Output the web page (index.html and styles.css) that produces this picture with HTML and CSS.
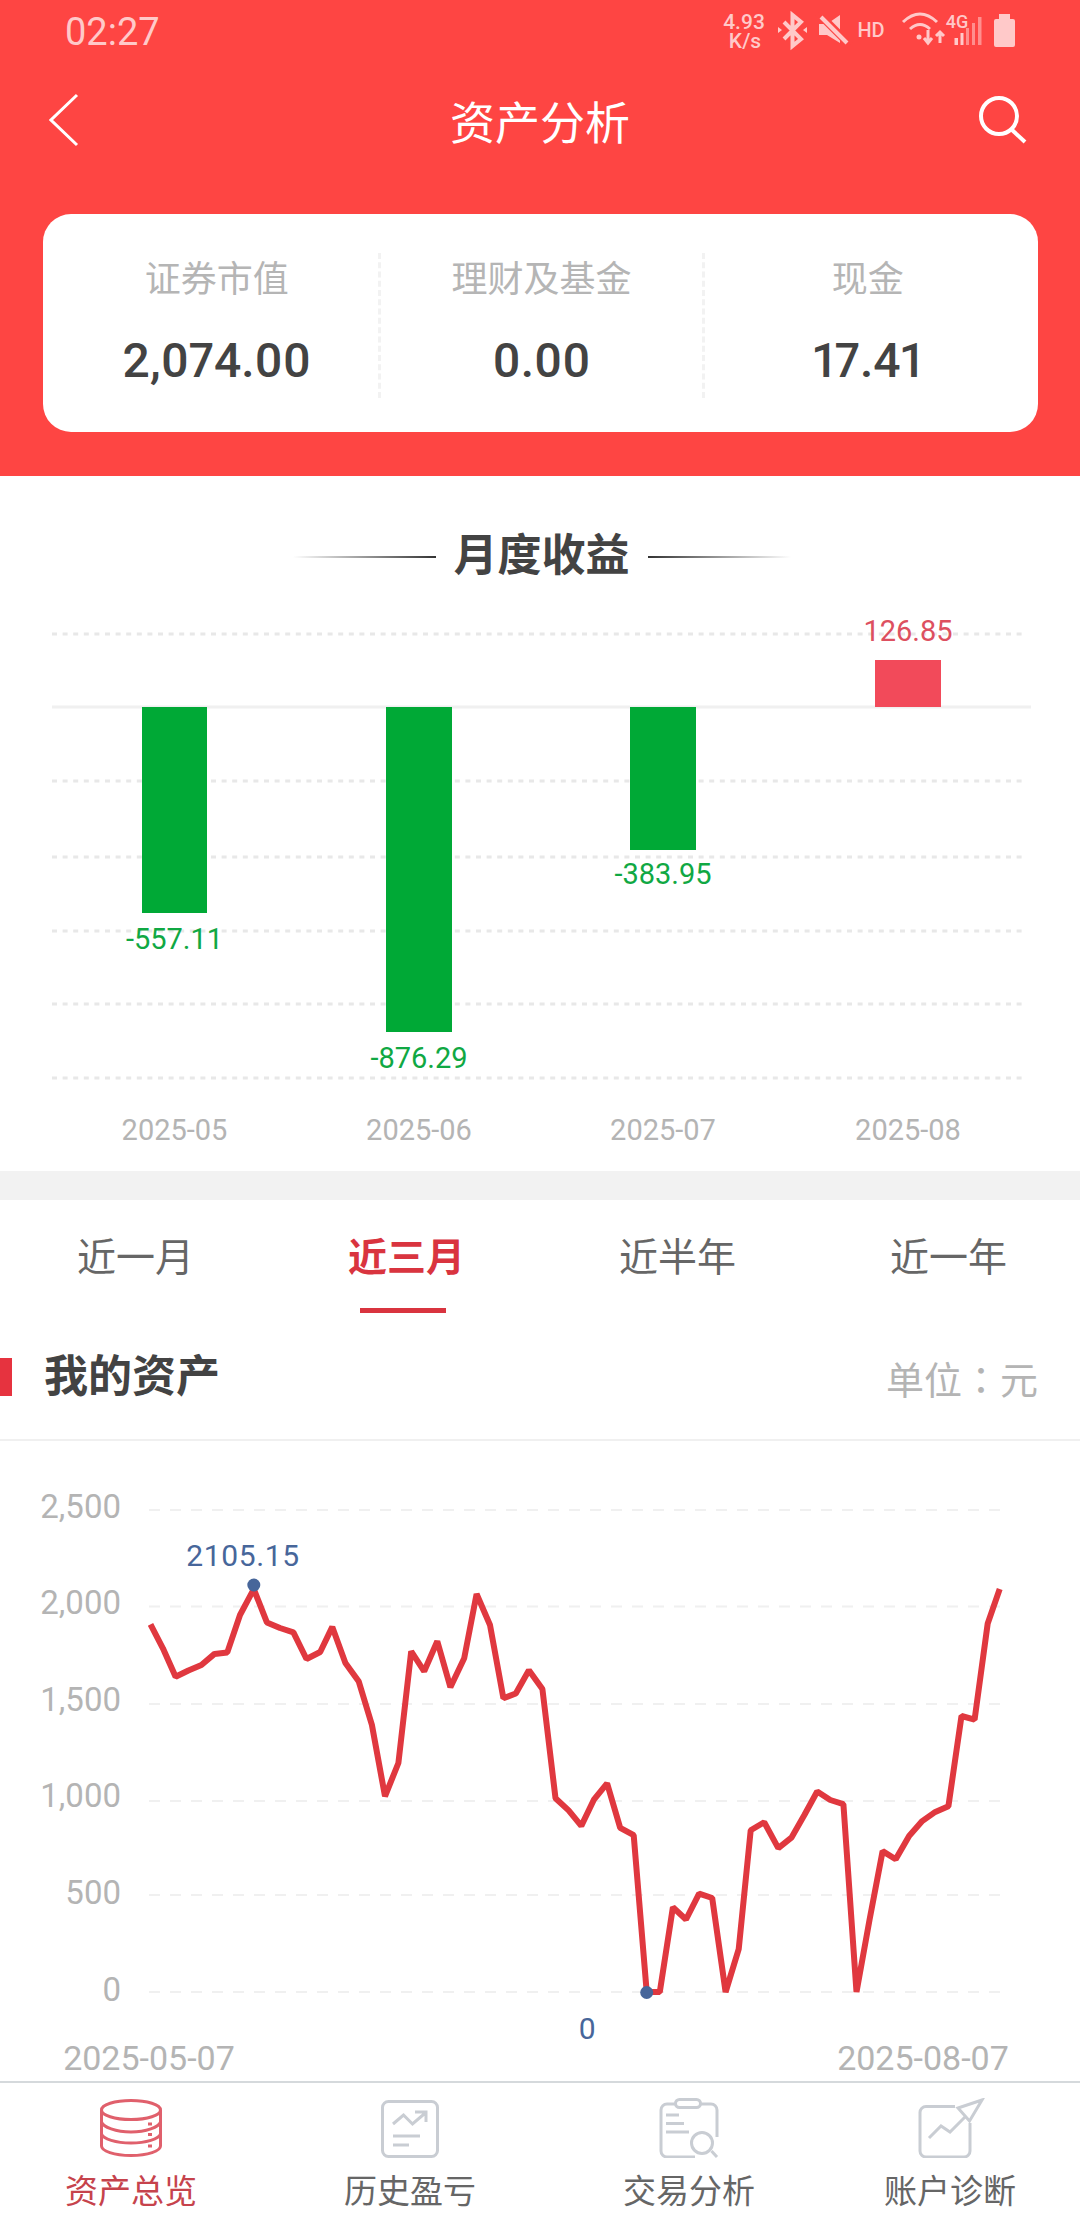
FILE: index.html
```html
<!DOCTYPE html>
<html lang="zh-CN">
<head>
  <meta charset="UTF-8" />
  <meta name="viewport" content="width=device-width, initial-scale=1.0" />
  <title>资产分析</title>
  <link rel="stylesheet" href="styles.css">
</head>
<body>
  <div class="top">
    <div class="status">
      <span class="time">02:27</span>
      <svg class="status-icons" width="300" height="64" viewBox="720 0 300 64">
        <text class="net"><tspan x="744" y="29">4.93</tspan><tspan x="745" y="48">K/s</tspan></text>
        <path class="st-line" d="M784 22L801 39L792.5 46V15L801 22L784 39"/>
        <path class="st-fill" d="M778 27l4 3l-4 3zM807 27l-4 3l4 3z"/>
        <path class="st-fill" d="M819 24h8l13-9v28l-13-8h-8z"/>
        <path class="st-cut" d="M818 13L850 45"/>
        <path class="st-slash" d="M821 17L847 43"/>
        <text class="hd" x="871" y="37">HD</text>
        <path class="st-line thin" d="M903 22Q920 6 937 22M910 29Q920 20 930 29"/>
        <circle class="st-fill" cx="919" cy="37" r="2.5"/>
        <path class="st-line thin" d="M928 30V42M924 38L928 43L932 38M940 43V33M936 36L940 32L944 36"/>
        <text class="net four" x="957" y="28">4G</text>
        <path class="st-fill" d="M954.500 38h3.500v7h-3.500zM960.500 33h3v12h-3z"/>
        <path class="st-dim" d="M966 28h3v17h-3zM972 23h3v22h-3zM978 17h3.500v28h-3.500z"/>
        <path class="st-fill" d="M999 14h11v5h3a2 2 0 0 1 2 2v24a2 2 0 0 1-2 2h-17a2 2 0 0 1-2-2v-24a2 2 0 0 1 2-2h3z"/>
      </svg>
    </div>
    <div class="nav">
      <svg class="nav-back" width="30" height="54" viewBox="0 0 30 54"><path class="nav-line back" d="M28 2L2 27L28 52"/></svg>
      <h1>资产分析</h1>
      <svg class="nav-search" width="48" height="48" viewBox="0 0 48 48"><circle class="nav-line" cx="20" cy="20" r="18"/><path class="nav-line" d="M32 33L46 46"/></svg>
    </div>
    <div class="card">
      <div class="stat">
        <div class="stat-label">证券市值</div>
        <div class="stat-value">2,074.00</div>
      </div>
      <div class="stat">
        <div class="stat-label">理财及基金</div>
        <div class="stat-value">0.00</div>
      </div>
      <div class="stat">
        <div class="stat-label">现金</div>
        <div class="stat-value">17.41</div>
      </div>
    </div>
  </div>

  <div class="monthly">
    <div class="monthly-title">
      <span class="rule rule-left"></span>
      <h2>月度收益</h2>
      <span class="rule rule-right"></span>
    </div>
    <svg class="chart" width="1080" height="581" viewBox="0 590 1080 581">
      <path class="dots" d="M52 634H1025M52 781H1025M52 857H1025M52 931H1025M52 1004H1025M52 1078H1025"/>
      <path class="axis" d="M52 707H1031"/>
      <rect class="bar-down" x="142" y="707" width="65" height="206"/>
      <rect class="bar-down" x="386" y="707" width="66" height="325"/>
      <rect class="bar-down" x="630" y="707" width="66" height="143"/>
      <rect class="bar-up" x="875" y="660" width="66" height="47"/>
      <text class="val down" x="174.500" y="949">-557.11</text>
      <text class="val down" x="419" y="1068">-876.29</text>
      <text class="val down" x="663" y="884">-383.95</text>
      <text class="val up" x="908" y="641">126.85</text>
      <text class="month" x="174.500" y="1140">2025-05</text>
      <text class="month" x="419" y="1140">2025-06</text>
      <text class="month" x="663" y="1140">2025-07</text>
      <text class="month" x="908" y="1140">2025-08</text>
    </svg>
  </div>

  <div class="band"></div>

  <div class="tabs">
    <div class="tab">近一月</div>
    <div class="tab active">近三月</div>
    <div class="tab">近半年</div>
    <div class="tab">近一年</div>
  </div>

  <div class="section-head">
    <h3>我的资产</h3>
    <span class="unit" lang="zh-TW">单位：元</span>
  </div>

  <svg class="chart" width="1080" height="640" viewBox="0 1441 1080 640">
    <path class="dash" d="M149 1510H1000M149 1606.500H1000M149 1704H1000M149 1801H1000M149 1895H1000M149 1992H1000"/>
    <text class="tick" x="121" y="1518">2,500</text>
    <text class="tick" x="121" y="1614">2,000</text>
    <text class="tick" x="121" y="1711">1,500</text>
    <text class="tick" x="121" y="1807">1,000</text>
    <text class="tick" x="121" y="1904">500</text>
    <text class="tick" x="121" y="2001">0</text>
    <polyline class="trend" points="150.500,1624.300 162.900,1648.300 175.600,1676.800 188.400,1670.500 201.400,1665 214.500,1653.900 227.300,1652.400 240,1615 253.800,1589.100 266.900,1622.400 280,1628 293.400,1632.400 306.500,1659 320.200,1652 332.300,1626.900 345.400,1663.100 358.800,1681.600 371.900,1724.900 385,1796.300 398.400,1763 411.200,1651.300 424.200,1671.300 437.300,1641.300 450.400,1687.200 464.200,1658.300 476.600,1594 490,1625 503.400,1698.300 515.800,1693.500 528.900,1670.200 542.400,1689 555.500,1798.200 568.600,1810.400 581.300,1825.900 594.100,1799.300 607.100,1783.400 620.200,1827.800 633.700,1835.200 646.700,1992 659.800,1992 672.900,1907.300 686,1919.500 699.100,1893.600 712.200,1898 725.600,1992 738.700,1949.100 750.700,1830.300 764.200,1822.200 778.300,1848.100 791.400,1837.700 804.500,1814.800 817.200,1791.500 830.300,1800 843.400,1804.100 856.500,1992 869.500,1920 882.600,1851.100 895.700,1859.200 909.100,1835.900 922.200,1821.100 935.300,1811.900 948.400,1806.300 961.500,1716 974.600,1719.700 987.700,1623.500 999.700,1589.100"/>
    <circle class="mark" cx="253.800" cy="1585" r="6.500"/>
    <circle class="mark" cx="646.700" cy="1992.500" r="6.500"/>
    <text class="mark-label" x="243" y="1566">2105.15</text>
    <text class="mark-label" x="587.500" y="2039">0</text>
    <text class="date" x="149" y="2070">2025-05-07</text>
    <text class="date" x="923" y="2070">2025-08-07</text>
  </svg>

  <div class="tabbar">
    <div class="tabbar-item active">
      <svg width="70" height="60" viewBox="96 2098 70 60">
        <ellipse cx="131" cy="2110" rx="29.500" ry="9.500"/>
        <path d="M101.500 2110V2146C101.500 2151 114 2155.500 131 2155.500S160.500 2151 160.500 2146V2110"/>
        <path d="M101.500 2122C103 2127 116 2132 131 2132S159 2127 160.500 2122M101.500 2134C103 2139 116 2143 131 2143S159 2139 160.500 2134"/>
        <path d="M148 2124H152M148 2134.500H152M148 2146H152"/>
      </svg>
      <span>资产总览</span>
    </div>
    <div class="tabbar-item">
      <svg width="70" height="60" viewBox="375 2098 70 60">
        <rect x="382.500" y="2101.500" width="55" height="55" rx="6"/>
        <path d="M393 2124L403.500 2115L412.500 2124L425.300 2113M415 2112H426V2122M393 2136H420M393 2145H409"/>
      </svg>
      <span>历史盈亏</span>
    </div>
    <div class="tabbar-item">
      <svg width="70" height="60" viewBox="654 2098 70 60">
        <rect x="675.500" y="2099.500" width="25" height="8" rx="4"/>
        <path d="M675 2104H667A6 6 0 0 0 661 2110V2151A6 6 0 0 0 667 2157H695M701 2104H711A6 6 0 0 1 717 2110V2137"/>
        <path d="M666 2115H679M666 2123.500H684M666 2132H689"/>
        <circle cx="702" cy="2143" r="10.500"/>
        <path d="M711.500 2151L717 2157"/>
      </svg>
      <span>交易分析</span>
    </div>
    <div class="tabbar-item">
      <svg width="70" height="60" viewBox="915 2098 70 60">
        <path d="M955 2106.500H926A6 6 0 0 0 920 2112.500V2151A6 6 0 0 0 926 2157H964A6 6 0 0 0 970 2151V2123"/>
        <path d="M982 2100L958 2108L969.500 2121ZM929 2138L941 2126L950 2132L965 2117"/>
      </svg>
      <span>账户诊断</span>
    </div>
  </div>
</body>
</html>
```
FILE: styles.css
```css
* {
  box-sizing: border-box;
}
body {
  font-family: Roboto, "Noto Sans CJK SC", sans-serif;
  background: #fff;
  color: #3d3d3d;
  margin: 0;
  width: 1080px;
  height: 2220px;
  overflow: hidden;
}
h1, h2, h3 {
  margin: 0;
}

/* red header */
.top {
  background: #fe4543;
  height: 476px;
}
.status {
  height: 64px;
  padding-left: 65px;
  display: flex;
  justify-content: space-between;
  align-items: center;
}
.time {
  color: #ffc9c9;
  font-size: 38px;
  line-height: 64px;
}
.status-icons {
  display: block;
  margin-right: 60px;
}
.net {
  fill: #ffc9c9;
  font-size: 21px;
  font-weight: 500;
  text-anchor: middle;
}
.four {
  font-size: 18px;
}
.hd {
  fill: #ffc9c9;
  font-size: 20px;
  font-weight: 500;
  text-anchor: middle;
}
.st-fill {
  fill: #ffc9c9;
}
.st-dim {
  fill: #ff8f8e;
}
.st-line {
  fill: none;
  stroke: #ffc9c9;
  stroke-width: 4;
}
.st-line.thin {
  stroke-width: 3;
}
.st-cut {
  stroke: #fe4543;
  stroke-width: 8;
}
.st-slash {
  stroke: #ffc9c9;
  stroke-width: 4;
}
.nav {
  height: 114px;
  padding: 0 52px 2px;
  display: grid;
  grid-template-columns: 1fr auto 1fr;
  align-items: center;
}
.nav h1 {
  color: #fff;
  font-size: 45px;
  font-weight: 400;
}
.nav-back {
  margin-left: -3px;
}
.nav-search {
  justify-self: end;
  margin-right: 1px;
}
.nav-line {
  fill: none;
  stroke: #fff;
  stroke-width: 4;
}
.nav-line.back {
  stroke-width: 3;
}
.card {
  background: #fff;
  border-radius: 28px;
  margin: 36px 42px 0 43px;
  height: 218px;
  padding: 39px 8px 0 13px;
  display: grid;
  grid-template-columns: repeat(3, 1fr);
  align-items: start;
}
.stat {
  height: 145px;
  text-align: center;
  border-right: 3px dashed #f2f2f2;
}
.stat:last-child {
  border-right: none;
}
.stat-label {
  color: #b5b5b5;
  font-size: 36px;
  line-height: 54px;
}
.stat-value {
  color: #434343;
  font-size: 48px;
  font-weight: 500;
  font-variant-numeric: proportional-nums;
  line-height: 60px;
  margin-top: 24px;
}

/* monthly bars */
.monthly {
  height: 695px;
}
.monthly-title {
  height: 114px;
  padding: 50px 0 0 3px;
  display: flex;
  justify-content: center;
  align-items: flex-start;
  gap: 18px;
}
.monthly-title h2 {
  color: #434343;
  font-size: 44px;
  font-weight: 700;
  line-height: 60px;
}
.rule {
  width: 143px;
  height: 2px;
  margin-top: 30px;
}
.rule-left {
  background: linear-gradient(to right, rgba(51,51,51,0), #333);
}
.rule-right {
  background: linear-gradient(to left, rgba(51,51,51,0), #333);
}
.chart {
  display: block;
}
.dots {
  stroke: #e8e8e8;
  stroke-width: 3;
  stroke-dasharray: 5 5.6;
}
.axis {
  stroke: #f0f0f0;
  stroke-width: 3;
}
.bar-down {
  fill: #00a936;
}
.bar-up {
  fill: #f24a5a;
}
.val {
  font-size: 29px;
  text-anchor: middle;
}
.val.down {
  fill: #10a843;
}
.val.up {
  fill: #dd5060;
}
.month {
  fill: #b4b4b4;
  font-size: 29px;
  text-anchor: middle;
}
.band {
  height: 29px;
  background: #f2f2f2;
}

/* range tabs */
.tabs {
  height: 115px;
  padding-left: 4px;
  display: grid;
  grid-template-columns: repeat(4, 271px);
  justify-content: center;
}
.tab {
  color: #666;
  font-size: 39px;
  line-height: 56px;
  padding-top: 30px;
  text-align: center;
}
.tab.active {
  color: #d9343f;
  font-weight: 700;
}
.tab.active::after {
  content: "";
  display: block;
  width: 86px;
  height: 5px;
  margin: 22px 0 0 89px;
  background: #d9343f;
}

/* my assets */
.section-head {
  height: 126px;
  padding-right: 42px;
  border-bottom: 2px solid #f0f0f0;
  display: flex;
  justify-content: space-between;
  align-items: center;
}
.section-head h3 {
  color: #434343;
  font-size: 44px;
  font-weight: 700;
  line-height: 38px;
  padding-left: 32px;
  border-left: 12px solid #e6333f;
}
.unit {
  color: #b4b4b4;
  font-family: Roboto, "Noto Sans CJK TC", sans-serif;
  font-size: 38px;
}
.dash {
  stroke: #f0f0f0;
  stroke-width: 2;
  stroke-dasharray: 11 10;
}
.tick {
  fill: #b4b4b4;
  font-size: 33px;
  text-anchor: end;
}
.trend {
  fill: none;
  stroke: #e0383f;
  stroke-width: 6;
  stroke-linejoin: bevel;
}
.mark {
  fill: #47669a;
}
.mark-label {
  fill: #47669a;
  font-size: 30px;
  letter-spacing: 0.6px;
  text-anchor: middle;
}
.date {
  fill: #b4b4b4;
  font-size: 34px;
  text-anchor: middle;
}

/* bottom bar */
.tabbar {
  height: 139px;
  border-top: 2px solid #d5d9dc;
  padding-top: 15px;
  display: grid;
  grid-template-columns: 262px 296px 262px 260px;
}
.tabbar-item {
  color: #666;
  font-size: 33px;
  line-height: 40px;
  display: flex;
  flex-direction: column;
  align-items: center;
  gap: 14px;
}
.tabbar-item svg {
  display: block;
  fill: none;
  stroke: #c9cdd3;
  stroke-width: 3;
}
.tabbar-item.active {
  color: #c6434c;
}
.tabbar-item.active svg {
  stroke: #e0606c;
}
```
